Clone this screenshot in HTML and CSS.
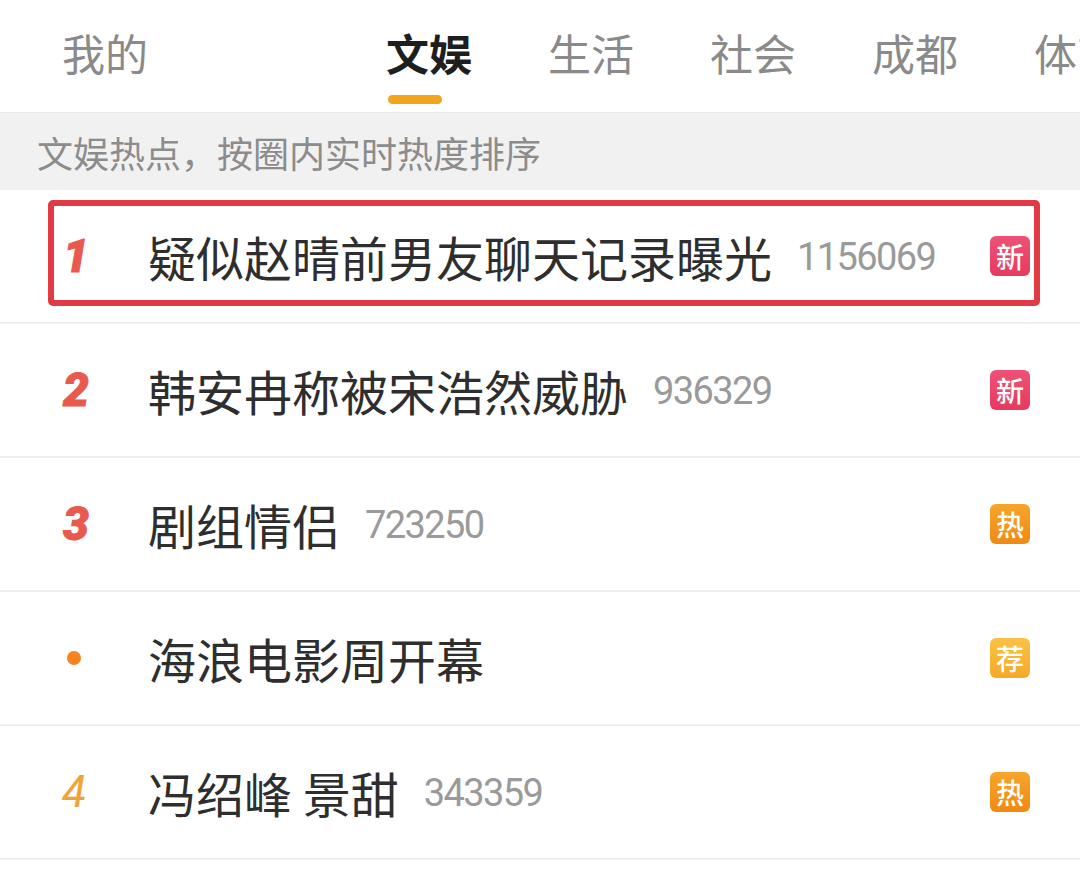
FILE: index.html
```html
<!DOCTYPE html>
<html lang="zh-CN">
<head>
<meta charset="utf-8">
<title>文娱热点</title>
<link rel="stylesheet" href="styles.css">
</head>
<body>
<div class="page">
  <nav class="tabs">
    <div class="tab tab-mine">我的</div>
    <div class="tab tab-active">文娱<span class="tab-bar"></span></div>
    <div class="tab">生活</div>
    <div class="tab">社会</div>
    <div class="tab">成都</div>
    <div class="tab">体育</div>
  </nav>
  <div class="banner">文娱热点，按圈内实时热度排序</div>
  <ul class="list">
    <li class="row row-marked">
      <span class="rank rank-top">1</span>
      <span class="title">疑似赵晴前男友聊天记录曝光</span>
      <span class="count">1156069</span>
      <span class="badge badge-new">新</span>
      <span class="mark"></span>
    </li>
    <li class="row">
      <span class="rank rank-top">2</span>
      <span class="title">韩安冉称被宋浩然威胁</span>
      <span class="count">936329</span>
      <span class="badge badge-new">新</span>
    </li>
    <li class="row">
      <span class="rank rank-top">3</span>
      <span class="title">剧组情侣</span>
      <span class="count">723250</span>
      <span class="badge badge-hot">热</span>
    </li>
    <li class="row">
      <span class="rank"><span class="dot"></span></span>
      <span class="title">海浪电影周开幕</span>
      <span class="count"></span>
      <span class="badge badge-rec">荐</span>
    </li>
    <li class="row">
      <span class="rank rank-normal">4</span>
      <span class="title">冯绍峰 景甜</span>
      <span class="count">343359</span>
      <span class="badge badge-hot">热</span>
    </li>
  </ul>
</div>
</body>
</html>
```

FILE: styles.css
```css
* { box-sizing: border-box; }
html, body {
  margin: 0;
  padding: 0;
  background: #ffffff;
}
body {
  font-family: "Noto Sans CJK SC", "Noto Sans", sans-serif;
  width: 1080px;
  height: 881px;
  overflow: hidden;
}
.page { width: 1080px; }

.tabs {
  display: flex;
  align-items: center;
  height: 112px;
  padding-left: 62px;
  padding-bottom: 8px;
  overflow: hidden;
  white-space: nowrap;
  gap: 76px;
}
.tab {
  position: relative;
  flex: none;
  font-size: 43px;
  line-height: 60px;
  color: #8a8a8a;
}
.tab-mine { margin-right: 162px; }
.tab-active {
  color: #1e1e1e;
  font-weight: 700;
}
.tab-bar {
  position: absolute;
  left: 2px;
  top: 73px;
  width: 54px;
  height: 9px;
  border-radius: 5px;
  background: #f0a51c;
}

.banner {
  height: 78px;
  background: #f1f1f1;
  border-top: 1px solid #e8e8e8;
  padding-left: 37px;
  display: flex;
  align-items: center;
  font-size: 36px;
  color: #8c8c8c;
}

.list {
  list-style: none;
  margin: 0;
  padding: 0;
}
.row {
  position: relative;
  display: flex;
  align-items: center;
  height: 134px;
  border-bottom: 2px solid #eeeeee;
  padding-right: 50px;
}
.rank {
  flex: none;
  width: 148px;
  display: flex;
  justify-content: center;
  align-items: center;
  font-family: Roboto, "Liberation Sans", sans-serif;
  font-style: italic;
  font-size: 44px;
  line-height: 1;
}
.rank-top {
  color: #e85a4e;
  font-weight: 900;
  font-size: 46px;
  -webkit-text-stroke: 1px #e85a4e;
  padding-left: 4px;
}
.rank-normal {
  color: #efa238;
  font-weight: 400;
}
.dot {
  width: 14px;
  height: 14px;
  border-radius: 50%;
  background: #f5841f;
}
.title {
  flex: none;
  font-size: 48px;
  color: #2e2e2e;
  line-height: 60px;
}
.count {
  flex: 1;
  margin-left: 25px;
  font-family: Roboto, "Liberation Sans", sans-serif;
  font-size: 38px;
  letter-spacing: -1.6px;
  color: #9a9a9a;
  padding-top: 2px;
}
.badge {
  flex: none;
  width: 40px;
  height: 40px;
  border-radius: 6px;
  color: #ffffff;
  font-size: 28px;
  line-height: 40px;
  text-align: center;
  font-weight: 500;
}
.badge-new { background: linear-gradient(180deg, #ee5277, #e63a5e); }
.badge-hot { background: linear-gradient(180deg, #f6a52c, #f08912); }
.badge-rec { background: linear-gradient(180deg, #f9c246, #f5a82a); }

.mark {
  position: absolute;
  left: 48px;
  top: 10px;
  width: 992px;
  height: 106px;
  border: 6px solid #e23a42;
  border-radius: 5px;
  pointer-events: none;
}
```
